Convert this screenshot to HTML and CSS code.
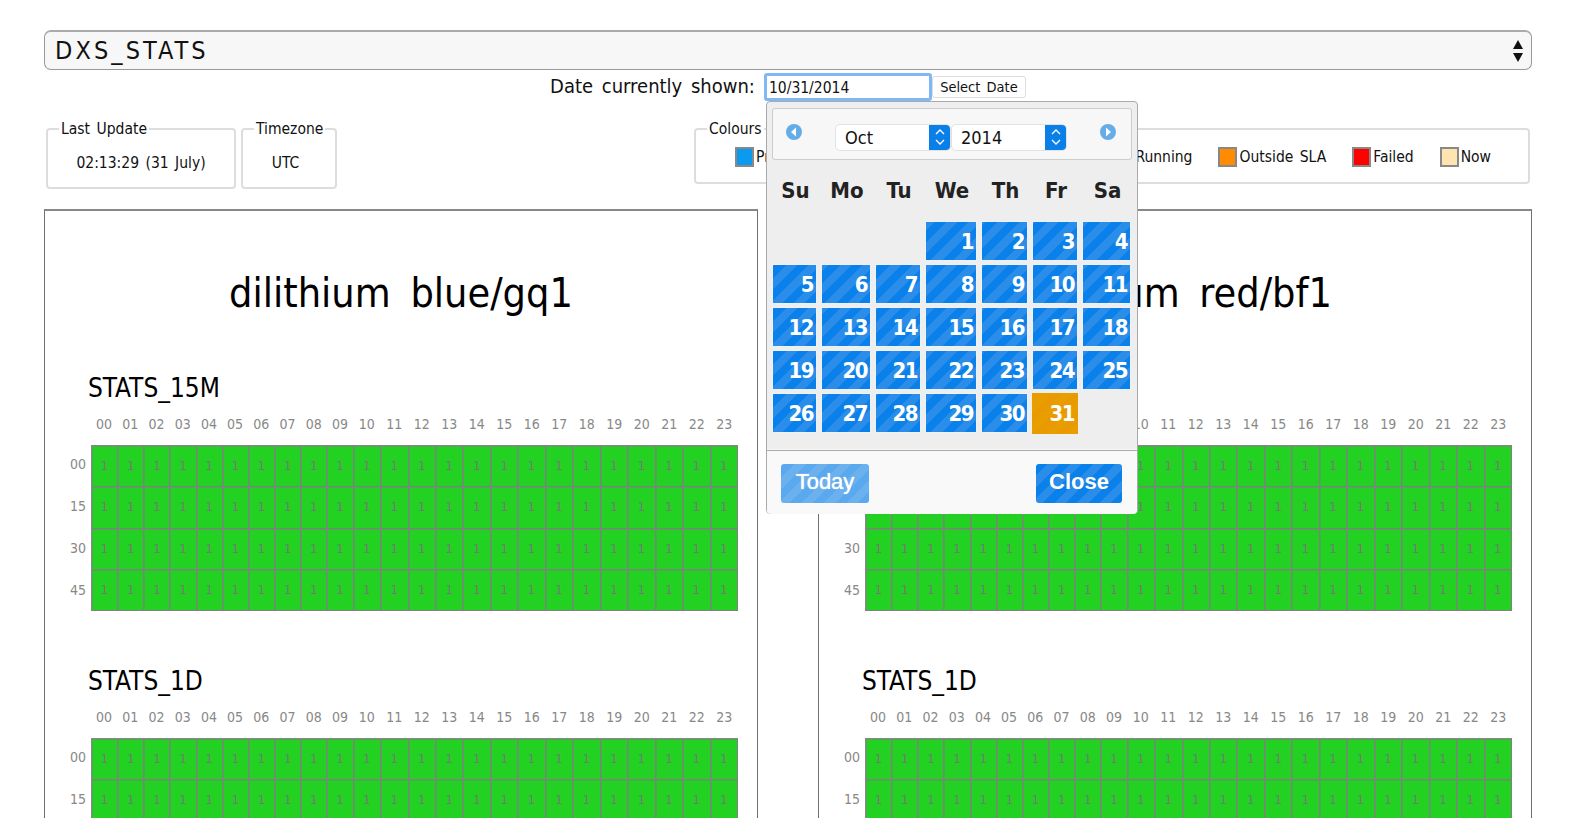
FILE: index.html
```html
<!DOCTYPE html>
<html lang="en">
<head>
<meta charset="utf-8">
<title>DXS_STATS</title>
<link rel="stylesheet" href="styles.css">
</head>
<body>
<div class="page">
  <div class="feed-select">
    <span>DXS_STATS</span>
    <svg class="updown" width="12" height="24" viewBox="0 0 12 24"><path d="M6 1 11 10H1zM1 14H11L6 23z" fill="#111"/></svg>
  </div>
  <div class="date-row">
    <span class="date-label">Date currently shown:</span>
    <span class="date-input">10/31/2014</span>
    <span class="date-button">Select Date</span>
    <div class="calendar">
      <div class="cal-head">
        <svg class="cal-nav" width="16" height="16" viewBox="0 0 16 16"><circle cx="8" cy="8" r="8" fill="#64ade9"/><path d="M10 3.5V12.500L5 8z" fill="#fff"/></svg>
        <div class="cal-selects">
          <div class="cal-select month"><span>Oct</span><i class="spin"><svg width="12" height="18" viewBox="0 0 12 18"><path d="M2 6 6 2l4 4M2 12l4 4 4-4" fill="none" stroke="#fff" stroke-width="1.3"/></svg></i></div>
          <div class="cal-select year"><span>2014</span><i class="spin"><svg width="12" height="18" viewBox="0 0 12 18"><path d="M2 6 6 2l4 4M2 12l4 4 4-4" fill="none" stroke="#fff" stroke-width="1.3"/></svg></i></div>
        </div>
        <svg class="cal-nav" width="16" height="16" viewBox="0 0 16 16"><circle cx="8" cy="8" r="8" fill="#64ade9"/><path d="M6 3.500V12.500L11 8z" fill="#fff"/></svg>
      </div>
      <div class="cal-grid" id="calGrid">
        <b>Su</b><b>Mo</b><b>Tu</b><b>We</b><b>Th</b><b>Fr</b><b>Sa</b>
      </div>
      <div class="cal-foot">
        <span class="cal-btn today">Today</span>
        <span class="cal-btn">Close</span>
      </div>
    </div>
  </div>
  <div class="info-row">
    <fieldset class="box update"><legend>Last Update</legend>02:13:29 (31 July)</fieldset>
    <fieldset class="box zone"><legend>Timezone</legend>UTC</fieldset>
    <fieldset class="box colours">
      <legend>Colours</legend>
      <span class="key first"><i class="swatch blue"></i>Processing</span>
      <span class="key"><i class="swatch green"></i>Running</span>
      <span class="key"><i class="swatch orange"></i>Outside SLA</span>
      <span class="key"><i class="swatch red"></i>Failed</span>
      <span class="key"><i class="swatch now"></i>Now</span>
    </fieldset>
  </div>
  <div class="panels">
    <section class="panel" data-title="dilithium blue/gq1"></section>
    <section class="panel" data-title="dilithium red/bf1"></section>
  </div>
</div>
<script src="app.js"></script>
</body>
</html>
```
FILE: styles.css
```css
* { box-sizing: border-box; }
html, body { margin: 0; padding: 0; background: #fff; }
body { font-family: "DejaVu Sans Condensed", "DejaVu Sans", sans-serif; color: #111; }
.page { height: 100vh; overflow: hidden; padding: 30px 40px 0 44px; }

.feed-select { height: 40px; display: flex; align-items: center; justify-content: space-between; padding: 0 7px 0 10px; background: #f7f7f7; border: 1px solid #999; border-top: 2px solid #aaa; border-radius: 7px; font-size: 25px; letter-spacing: 3.1px; }
.updown { display: block; }

.date-row { position: relative; height: 28px; margin-top: 3px; display: flex; justify-content: center; align-items: center; }
.date-label { font-size: 20px; word-spacing: 3px; margin: -2px 9px 0 0; }
.date-input { width: 168px; height: 28px; padding: 3px 0 0 2px; font-size: 15.5px; border: 3px solid #7fb8f5; border-radius: 3px; background: #fff; }
.date-button { width: 94px; height: 22px; text-align: center; font-size: 14.5px; line-height: 21px; word-spacing: 2px; border: 1px solid #ddd; border-radius: 3px; }

.calendar { position: absolute; left: 722px; top: 28px; width: 372px; height: 413px; background: #eee; border: 1px solid #aaa; border-radius: 4px; padding: 6px 5px 0; z-index: 5; }
.cal-head { height: 52px; padding: 0 15px 0 13px; display: flex; align-items: center; justify-content: space-between; background: #f7f7f7; border: 1px solid #ccc; border-radius: 3px; }
.cal-nav { margin-top: -5px; }
.cal-selects { display: flex; margin-top: 6px; }
.cal-select { height: 27px; display: flex; align-items: center; justify-content: space-between; background: #fff; border: 1px solid #e2e2e2; border-radius: 5px; font-size: 18px; overflow: hidden; }
.month { width: 116px; padding-left: 9px; }
.year { width: 116px; padding-left: 9px; }
.spin { width: 21px; height: 27px; display: flex; align-items: center; justify-content: center; background: #0a7fe8; }

.cal-grid { margin-top: 0; height: 290px; display: grid; grid-template-columns: 49px 54px 50px 56px 51px 50px 53px; grid-template-rows: 61px repeat(5, 43px); align-items: start; }
.cal-grid b { align-self: center; text-align: center; font-size: 22px; padding-right: 2px; color: #222; }
.day { height: 40px; margin-right: 4px; padding: 7px 3px 0 0; text-align: right; color: #fff; font-size: 22px; font-weight: bold; letter-spacing: -1.5px; border: 1px solid #eaf3fb; background: repeating-linear-gradient(-45deg, #0a80ea 0 8px, #2a8de9 8px 16px); }
.day.active { border: 0; height: 41px; padding: 8px 4px 0 0; background: repeating-linear-gradient(-45deg, #e89e00 0 8px, #e99a00 8px 16px); }
.day.start { grid-column-start: 4; }

.cal-foot { margin: 0 -5px; height: 64px; padding: 13px 15px 0 14px; display: flex; justify-content: space-between; align-items: flex-start; background: #f9f9f9; border-top: 1px solid #aaa; border-radius: 0 0 4px 4px; box-shadow: 0 -1px 0 #f8f8f8; }
.cal-btn { width: 86px; height: 39px; line-height: 36px; text-align: center; color: #fff; font-family: "Liberation Sans", sans-serif; font-size: 22px; font-weight: bold; border-radius: 3px; background: repeating-linear-gradient(-45deg, #0a80ea 0 8px, #2a8de9 8px 16px); }
.today { width: 88px; font-weight: normal; text-shadow: 0 0 1px #fff; background: repeating-linear-gradient(-45deg, #5aa8ee 0 8px, #6bb1ee 8px 16px); }

.info-row { display: flex; gap: 5px; padding: 0 2px; margin-top: 19px; height: 70px; align-items: flex-start; }
.box { margin: 0; min-width: 0; padding: 16px 0 0; height: 69px; border: 2px solid #ddd; border-radius: 4px; text-align: center; font-size: 15.500px; }
.box legend { text-align: left; padding: 0 2px; margin-left: 11px; font-size: 15.500px; word-spacing: 2px; }
.update { width: 190px; word-spacing: 2px; }
.zone { width: 96px; padding-right: 7px; }
.zone legend { margin-left: 11px; }
.colours { margin-left: auto; width: 836px; height: 64px; padding: 9px 37px 0 0; display: flex; gap: 26px; }
.colours .first { margin-left: 39px; margin-right: auto; }
.key { display: flex; align-items: center; height: 20px; word-spacing: 2px; }
.swatch { width: 19px; height: 20px; margin-right: 2px; border: 2px solid #888; }
.blue { background: #0a9af0; }
.green { background: #22d122; }
.orange { background: #ff8c00; }
.red { background: #f00; }
.now { background: #ffe4b0; }

.panels { display: grid; grid-template-columns: 714px 714px; gap: 60px; margin-top: 19px; }
.panel { height: 700px; border: 1px solid #707070; border-top: 2px solid #888; border-bottom: 0; }
.panel h1 { height: 160px; margin: 0; padding-top: 57px; text-align: center; font-size: 41px; line-height: 50px; font-weight: normal; word-spacing: 8px; color: #000; }
.chart { height: 292.5px; }
.chart h2 { margin: 0 0 0 43px; height: 41px; font-size: 26px; line-height: 34px; font-weight: normal; color: #000; }
.chart-grid { display: grid; grid-template-columns: 46px 647px; grid-template-rows: 33px 166px; }
.hours { display: grid; grid-template-columns: repeat(10, 26.2fr) repeat(14, 27.5fr); align-items: center; height: 20px; margin-top: 2px; }
.hours span { text-align: center; font-size: 14px; color: #888; }
.rows { display: grid; grid-template-rows: repeat(4, 1fr); margin-top: -2px; }
.rows span { text-align: right; padding-right: 5px; font-size: 14px; color: #888; align-self: center; }
.heat { display: grid; grid-template-columns: repeat(10, 26.2fr) repeat(14, 27.5fr); grid-template-rows: repeat(4, 1fr); border-top: 1px solid #888; border-left: 1px solid #888; }
.heat span { display: flex; align-items: center; justify-content: center; padding-bottom: 1px; background: #22d122; border-right: 1px solid #808080; border-bottom: 1px solid #808080; box-shadow: inset 1px 1px 0 rgba(128, 128, 128, .5); color: #777; font-size: 13px; }
```
FILE: app.js
```js
function pad(n) { return (n < 10 ? '0' : '') + n; }

var grid = document.getElementById('calGrid');
for (var d = 1; d <= 31; d++) {
  var day = document.createElement('span');
  day.className = 'day' + (d === 1 ? ' start' : '') + (d === 31 ? ' active' : '');
  day.textContent = d;
  grid.appendChild(day);
}

function chart(name) {
  var hours = '', heat = '', rows = '';
  for (var h = 0; h < 24; h++) hours += '<span>' + pad(h) + '</span>';
  for (var c = 0; c < 96; c++) heat += '<span>1</span>';
  ['00', '15', '30', '45'].forEach(function (m) { rows += '<span>' + m + '</span>'; });
  return '<div class="chart"><h2>' + name + '</h2><div class="chart-grid"><div></div>' +
    '<div class="hours">' + hours + '</div><div class="rows">' + rows + '</div>' +
    '<div class="heat">' + heat + '</div></div></div>';
}

document.querySelectorAll('.panel').forEach(function (p) {
  p.innerHTML = '<h1>' + p.dataset.title + '</h1>' + chart('STATS_15M') + chart('STATS_1D');
});
```
